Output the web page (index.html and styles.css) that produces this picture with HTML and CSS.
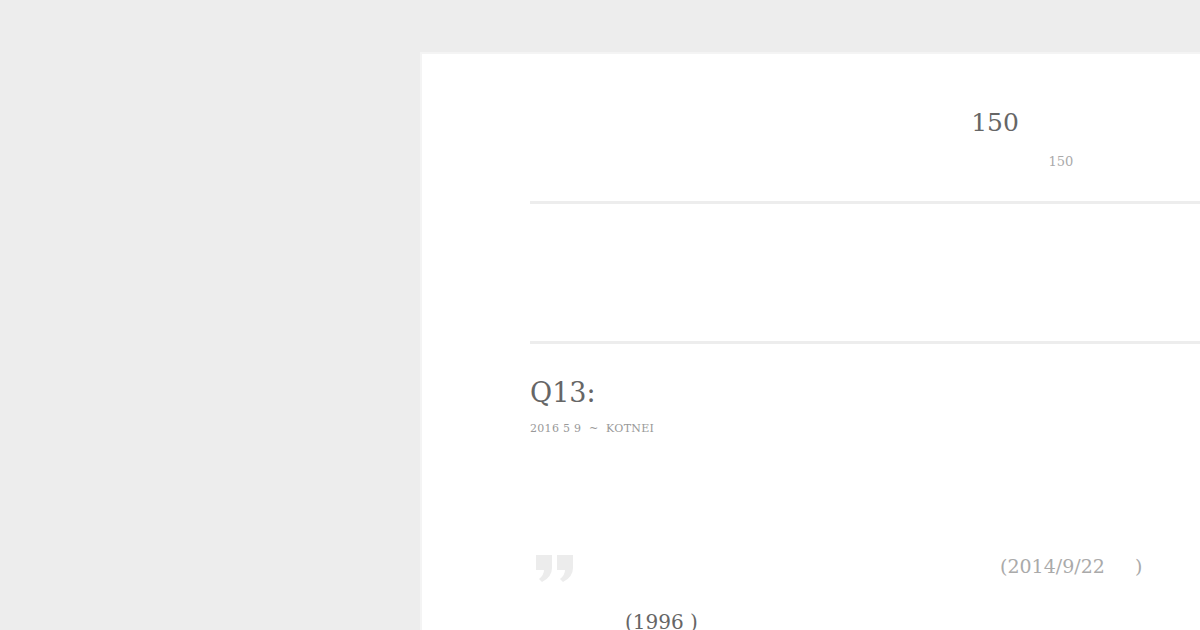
FILE: index.html
```html
<!DOCTYPE html>
<html lang="ja">
<head>
    <meta charset="UTF-8">
    <title>Q13</title>
    <link rel="stylesheet" href="styles.css">
</head>
<body>

<div class="page">
    <div class="panel">
        <div class="content">
            <div class="hero">
                <h2 class="hero-title">150</h2>
                <p class="hero-sub">150</p>
            </div>
            <div class="blank"></div>
            <div class="post">
                <h1 class="post-title">Q13:</h1>
                <div class="post-meta">2016 5 9 &nbsp;~&nbsp; kotnei</div>
                <blockquote class="quote">
                    <svg class="quote-mark" width="38" height="27" viewBox="0 0 38 27">
                        <path d="M0 0 H16 V13 Q16 22 6 27 L3 24 Q8 20 8 15 H0 Z" fill="#ececec"/>
                        <path d="M21 0 H37 V13 Q37 22 27 27 L24 24 Q29 20 29 15 H21 Z" fill="#ececec"/>
                    </svg>
                    <p class="quote-date">(2014/9/22     )</p>
                    <p class="quote-line">(1996 )</p>
                </blockquote>
            </div>
        </div>
    </div>
</div>

</body>
</html>
```

FILE: styles.css
```css
html, body {
    margin: 0;
    padding: 0;
    overflow: hidden;
}
body {
    background-color: #ededed;
    font-family: "Roboto Slab", "DejaVu Serif", serif;
    color: #666;
}
.page {
    display: flex;
    padding: 54px 0 0 422px;
    min-height: 640px;
}
.panel {
    flex: 1;
    background-color: #fff;
    box-shadow: -2px -2px 0 #f4f4f4;
    padding-left: 108px;
}
.content {
    width: 930px;
}
.hero {
    box-sizing: border-box;
    height: 150px;
    padding-top: 51px;
    border-bottom: 3px solid #ededed;
    text-align: center;
}
.hero-title {
    margin: 0;
    font-size: 25px;
    font-weight: normal;
    line-height: 36px;
    color: #666;
}
.hero-sub {
    margin: 11px 0 0;
    padding-left: 132px;
    font-size: 13px;
    line-height: 20px;
    color: #aaa;
}
.blank {
    height: 137px;
    border-bottom: 3px solid #ededed;
}
.post {
    padding-top: 29px;
}
.post-title {
    margin: 0;
    font-size: 27px;
    font-weight: normal;
    line-height: 40px;
    color: #666;
}
.post-meta {
    margin-top: 9px;
    font-size: 11px;
    letter-spacing: 0.3px;
    text-transform: uppercase;
    color: #999;
}
.quote {
    position: relative;
    margin: 116px 0 0;
    padding-left: 95px;
}
.quote-mark {
    position: absolute;
    left: 6px;
    top: 4px;
}
.quote-date {
    margin: 0;
    padding-left: 375px;
    font-size: 19px;
    line-height: 30px;
    white-space: pre;
    color: #aaa;
}
.quote-line {
    margin: 26px 0 0;
    font-size: 20px;
    line-height: 30px;
    color: #666;
}
```
